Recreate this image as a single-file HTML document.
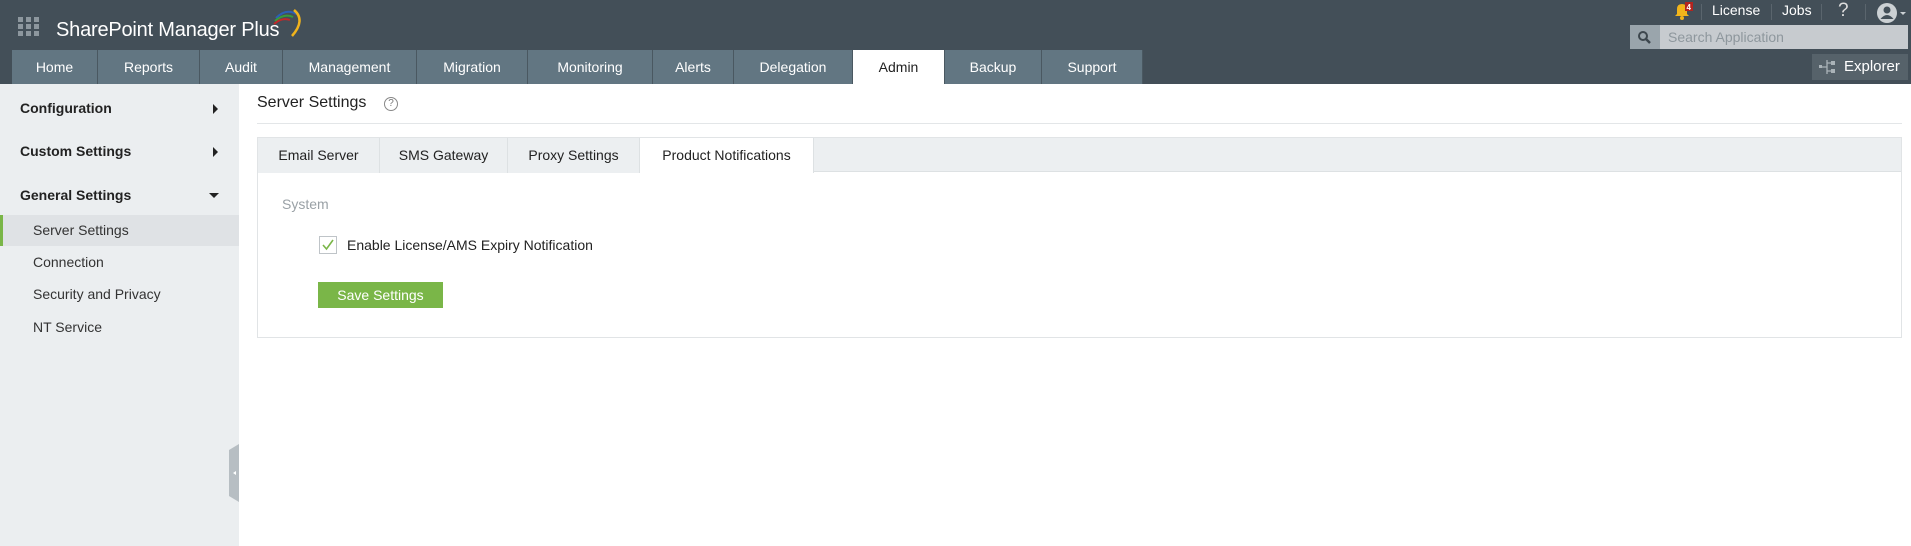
<!DOCTYPE html>
<html><head><meta charset="utf-8"><style>
*{box-sizing:border-box;margin:0;padding:0}
body{width:1911px;height:546px;overflow:hidden;background:#fff;font-family:"Liberation Sans",sans-serif;position:relative}
.hdr{position:absolute;left:0;top:0;width:1911px;height:84px;background:#434f58}
.abs{position:absolute}
.tab{position:absolute;top:50px;height:34px;background:#627682;color:#fff;font-size:14px;line-height:34px;text-align:center;border-right:1px solid #4a5861}
.tab.act{background:#fff;color:#222}
.side{position:absolute;left:0;top:84px;width:239px;height:462px;background:#ebeef0}
.si{position:absolute;left:20px;font-size:14px;font-weight:bold;color:#222}
.ss{position:absolute;left:33px;font-size:14px;color:#333}
.arr{position:absolute;left:213px;width:0;height:0;border-top:5px solid transparent;border-bottom:5px solid transparent;border-left:5px solid #222}
.ct{position:absolute;top:137px;height:35px;line-height:35px;font-size:14px;color:#222;text-align:center;background:#eceff1;border-right:1px solid #dde1e3}
</style></head><body>
<div class="hdr"></div>
<svg class="abs" style="left:18px;top:17px" width="22" height="20"><g fill="#8d979e"><rect x="0" y="0" width="5" height="5"/><rect x="8" y="0" width="5" height="5"/><rect x="16" y="0" width="5" height="5"/><rect x="0" y="7" width="5" height="5"/><rect x="8" y="7" width="5" height="5"/><rect x="16" y="7" width="5" height="5"/><rect x="0" y="14" width="5" height="5"/><rect x="8" y="14" width="5" height="5"/><rect x="16" y="14" width="5" height="5"/></g></svg>
<div class="abs" style="left:56px;top:18px;color:#fff;font-size:20px;line-height:24px;letter-spacing:-0.2px">SharePoint Manager Plus</div>
<svg class="abs" style="left:272px;top:6px" width="36" height="32"><path d="M4 12 Q14 2 24 8" stroke="#2b5fb8" stroke-width="2" fill="none"/><path d="M3 15 Q12 7 21 11" stroke="#3a9a3a" stroke-width="2" fill="none"/><path d="M2 18 Q10 11 18 14" stroke="#c0282a" stroke-width="2" fill="none"/><path d="M22 4 Q34 14 20 30" stroke="#f0b31c" stroke-width="2.5" fill="none"/></svg>
<!-- top right -->
<svg class="abs" style="left:1672px;top:1px" width="24" height="20"><path d="M3 15 L5 13 V8 Q5 3 10 3 Q15 3 15 8 V13 L17 15 Z" fill="#f2b51b"/><circle cx="10" cy="17" r="2" fill="#f2b51b"/><rect x="13" y="1" width="8" height="9" fill="#b3241f"/><text x="14.5" y="9" font-size="8" fill="#fff" font-weight="bold" font-family="Liberation Sans">4</text></svg>
<div class="abs" style="left:1701px;top:4px;width:1px;height:16px;background:#5a656d"></div>
<div class="abs" style="left:1712px;top:2px;color:#fff;font-size:14px">License</div>
<div class="abs" style="left:1771px;top:4px;width:1px;height:16px;background:#5a656d"></div>
<div class="abs" style="left:1782px;top:2px;color:#fff;font-size:14px">Jobs</div>
<div class="abs" style="left:1821px;top:4px;width:1px;height:16px;background:#5a656d"></div>
<div class="abs" style="left:1838px;top:0px;color:#ddd;font-size:19px">?</div>
<div class="abs" style="left:1865px;top:4px;width:1px;height:16px;background:#5a656d"></div>
<svg class="abs" style="left:1876px;top:2px" width="34" height="22"><circle cx="11" cy="11" r="10" fill="#ccd1d4"/><circle cx="11" cy="8" r="3.5" fill="#434f58"/><path d="M4.5 17 Q11 9 17.5 17 Z" fill="#434f58"/><path d="M24 10 L30 10 L27 13 Z" fill="#ccd1d4"/></svg>
<div class="abs" style="left:1630px;top:25px;width:278px;height:24px;background:#c7cbcf"></div>
<div class="abs" style="left:1630px;top:25px;width:30px;height:24px;background:#9aa5ac"></div>
<svg class="abs" style="left:1637px;top:30px" width="16" height="16"><circle cx="6" cy="6" r="4" stroke="#3d474e" stroke-width="2" fill="none"/><path d="M9 9 L13 13" stroke="#3d474e" stroke-width="2.5"/></svg>
<div class="abs" style="left:1668px;top:29px;color:#8e979d;font-size:14px">Search Application</div>
<div class="abs" style="left:1812px;top:54px;width:96px;height:26px;background:#56626a"></div>
<svg class="abs" style="left:1819px;top:59px" width="18" height="16"><g stroke="#aab3b8" stroke-width="1.3" fill="none"><path d="M8 1 V15 M8 4 H13 M8 12 H13 M1 8 H8"/></g><g fill="#aab3b8"><rect x="12" y="2" width="4" height="4"/><rect x="12" y="10" width="4" height="4"/><rect x="0" y="6" width="3" height="3"/></g></svg>
<div class="abs" style="left:1844px;top:58px;color:#fff;font-size:15px">Explorer</div>
<!-- tabs -->
<div class="tab" style="left:12px;width:86px">Home</div>
<div class="tab" style="left:98px;width:102px">Reports</div>
<div class="tab" style="left:200px;width:83px">Audit</div>
<div class="tab" style="left:283px;width:134px">Management</div>
<div class="tab" style="left:417px;width:111px">Migration</div>
<div class="tab" style="left:528px;width:125px">Monitoring</div>
<div class="tab" style="left:653px;width:81px">Alerts</div>
<div class="tab" style="left:734px;width:119px">Delegation</div>
<div class="tab act" style="left:853px;width:92px">Admin</div>
<div class="tab" style="left:945px;width:97px">Backup</div>
<div class="tab" style="left:1042px;width:101px">Support</div>
<!-- sidebar -->
<div class="side"></div>
<div class="si" style="top:100px">Configuration</div><div class="arr" style="top:104px"></div>
<div class="si" style="top:143px">Custom Settings</div><div class="arr" style="top:147px"></div>
<div class="si" style="top:187px">General Settings</div>
<div class="abs" style="left:209px;top:193px;border-left:5px solid transparent;border-right:5px solid transparent;border-top:5px solid #222"></div>
<div class="abs" style="left:0;top:215px;width:239px;height:31px;background:#dfe2e5;border-left:3px solid #7ab648"></div>
<div class="ss" style="top:222px">Server Settings</div>
<div class="ss" style="top:254px">Connection</div>
<div class="ss" style="top:286px">Security and Privacy</div>
<div class="ss" style="top:319px">NT Service</div>
<svg class="abs" style="left:229px;top:444px" width="10" height="58"><path d="M10 0 V58 L0 52 V6 Z" fill="#b7bec3"/><path d="M4 29 L7 27 V31 Z" fill="#fff"/></svg>
<!-- content -->
<div class="abs" style="left:257px;top:94px;font-size:16px;color:#222">Server Settings</div>
<div class="abs" style="left:384px;top:97px;width:14px;height:14px;border:1px solid #888;border-radius:50%;font-size:10px;line-height:12px;text-align:center;color:#777">?</div>
<div class="abs" style="left:257px;top:123px;width:1645px;height:1px;background:#e3e6e8"></div>
<div class="abs" style="left:257px;top:137px;width:1645px;height:201px;border:1px solid #e1e4e6"></div>
<div class="abs" style="left:258px;top:138px;width:1643px;height:34px;background:#eceff1;border-bottom:1px solid #dde1e3"></div>
<div class="ct" style="left:258px;top:138px;width:122px">Email Server</div>
<div class="ct" style="left:380px;top:138px;width:128px">SMS Gateway</div>
<div class="ct" style="left:508px;top:138px;width:132px">Proxy Settings</div>
<div class="ct" style="left:640px;top:138px;width:174px;height:35px;background:#fff">Product Notifications</div>
<div class="abs" style="left:282px;top:196px;font-size:14px;color:#9aa1a6">System</div>
<div class="abs" style="left:319px;top:236px;width:18px;height:18px;border:1px solid #bfc4c8;background:#fff"></div>
<svg class="abs" style="left:321px;top:238px" width="14" height="14"><path d="M2 7 L5.5 11 L12 2" stroke="#7ab648" stroke-width="1.6" fill="none"/></svg>
<div class="abs" style="left:347px;top:237px;font-size:14px;color:#222">Enable License/AMS Expiry Notification</div>
<div class="abs" style="left:318px;top:282px;width:125px;height:26px;background:#7ab648;color:#fff;font-size:14px;line-height:26px;text-align:center">Save Settings</div>
</body></html>
